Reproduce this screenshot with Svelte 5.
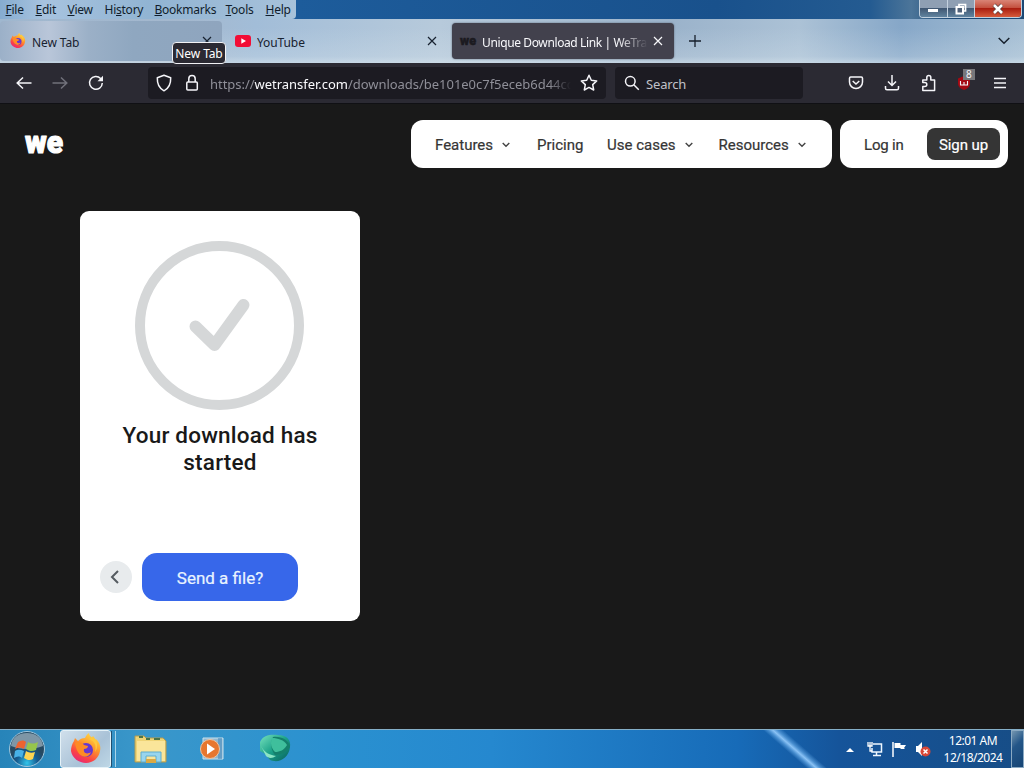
<script lang="ts">
	const menus = ["File", "Edit", "View", "History", "Bookmarks", "Tools", "Help"];
	const accessKeys = [0, 0, 0, 2, 0, 0, 0];
	const menuWidths = [30, 32, 37, 50, 71, 40, 36];

	const navItems = [
		{ label: "Features", width: 102, arrow: true },
		{ label: "Pricing", width: 70, arrow: false },
		{ label: "Use cases", width: 111.5, arrow: true },
		{ label: "Resources", width: 90, arrow: true },
	];
</script>

{#snippet firefox(size: number)}
	<svg width={size} height={size} viewBox="0 0 32 32">
		<defs>
			<linearGradient id="flame" x1="0.8" y1="0" x2="0.25" y2="1">
				<stop offset="0" stop-color="#ffe14a" />
				<stop offset="0.4" stop-color="#ff9a2b" />
				<stop offset="0.75" stop-color="#fb4345" />
				<stop offset="1" stop-color="#e5257b" />
			</linearGradient>
		</defs>
		<path
			d="M4 8l1-3 3 3c2-2 4-3 7-3 1-2 2-4 4-5 0 4 4 4 6 7l1-1c4 4 5 8 4 12-1 7-7 12-14 12S2 25 1 18c0-4 1-7 3-10z"
			fill="url(#flame)"
		/>
		<circle cx="16" cy="17" r="7" fill="#6637cf" />
		<path d="M5 10c4-2 7-1 9 2l4 1c0 2-2 3-4 3-1 4 3 6 7 3-1 4-6 6-9 4-4-2-6-7-7-13z" fill="#ff8b24" />
		<path d="M18 6c6 1 9 6 7 13 4-5 2-12-2-16-1 2-3 3-5 3z" fill="#ffc83d" />
	</svg>
{/snippet}

{#snippet close()}
	<svg class="close" width="10" height="10" viewBox="0 0 10 10">
		<path d="M1 1l8 8M9 1L1 9" fill="none" stroke="currentColor" stroke-width="1.2" />
	</svg>
{/snippet}

<div class="screen">
	<header class="titlebar">
		<nav class="menus">
			{#each menus as menu, i}
				<span style:width="{menuWidths[i]}px"
					>{menu.slice(0, accessKeys[i])}<u>{menu[accessKeys[i]]}</u>{menu.slice(accessKeys[i] + 1)}</span
				>
			{/each}
		</nav>
		<div class="window-buttons">
			<span class="minimize"><i></i></span>
			<span class="restore">
				<svg width="12" height="12" viewBox="0 0 12 12">
					<path d="M4 3V1.5h6.5V8H9" fill="none" stroke="#fff" stroke-width="1.7" />
					<rect x="1.5" y="4" width="6.5" height="6.5" fill="#50627a" stroke="#fff" stroke-width="2" />
				</svg>
			</span>
			<span class="exit">
				<svg width="12" height="10" viewBox="0 0 12 10">
					<path d="M2 1l8 8M10 1L2 9" stroke="#594040" stroke-width="4" />
					<path d="M2 1l8 8M10 1L2 9" stroke="#fff" stroke-width="2.6" />
				</svg>
			</span>
		</div>
	</header>

	<div class="tabs">
		<div class="tab hovered">
			{@render firefox(16)}
			<span class="title">New Tab</span>
			{@render close()}
			<div class="tooltip">New Tab</div>
		</div>
		<div class="tab">
			<svg width="16" height="16" viewBox="0 0 16 16">
				<rect y="2" width="16" height="12" rx="3" fill="#f20d36" />
				<path d="M6.3 5.2v5.6L11 8z" fill="#fff" />
			</svg>
			<span class="title">YouTube</span>
			{@render close()}
		</div>
		<div class="tab active">
			<svg width="16" height="16" viewBox="0 0 16 16">
				<text x="0" y="11.5" textLength="16" lengthAdjust="spacingAndGlyphs" class="favicon">we</text>
			</svg>
			<span class="title fade">Unique Download Link | WeTransfer</span>
			{@render close()}
		</div>
		<svg class="plus" width="12" height="12" viewBox="0 0 12 12">
			<path d="M6 0v12M0 6h12" stroke="#17202c" stroke-width="1.3" />
		</svg>
		<svg class="all-tabs" width="12" height="8" viewBox="0 0 12 8">
			<path d="M.7 1L6 6.3 11.3 1" fill="none" stroke="#17202c" stroke-width="1.5" />
		</svg>
	</div>

	<div class="toolbar">
		<div class="history">
			<svg width="16" height="16" viewBox="0 0 16 16">
				<path d="M15.5 8H1.5M7 2.5L1.2 8 7 13.5" />
			</svg>
			<svg class="dim" width="16" height="16" viewBox="0 0 16 16">
				<path d="M.5 8h14M9 2.5L14.800 8 9 13.5" />
			</svg>
			<svg width="16" height="16" viewBox="0 0 16 16">
				<path d="M14.3 8A6.4 6.4 0 1 1 12.6 3.5L14 5" />
				<path d="M15 .8v5.5H9.5z" fill="#f5f5f9" stroke="none" />
			</svg>
		</div>
		<div class="address">
			<svg width="16" height="18" viewBox="0 0 16 18">
				<path d="M8 1.2l6.7 2.6c.2 6-1.8 10.6-6.7 13C3.1 14.4 1.1 9.8 1.3 3.8z" stroke-linejoin="round" />
			</svg>
			<svg width="14" height="18" viewBox="0 0 14 18">
				<rect x="1.8" y="8" width="10.5" height="8" rx="1" />
				<path d="M3.8 8V4.7a3.2 3.2 0 0 1 6.4 0V8" />
			</svg>
			<span class="url">https://<b>wetransfer.com</b>/downloads/be101e0c7f5eceb6d44cd</span>
			<svg width="18" height="18" viewBox="0 0 18 18">
				<path
					d="M9 1.3l2.3 4.9 5.4.7-4 3.7 1 5.4L9 13.4 4.3 16l1-5.4-4-3.7 5.4-.7z"
					stroke-linejoin="round"
				/>
			</svg>
		</div>
		<div class="search">
			<svg width="16" height="16" viewBox="0 0 16 16">
				<circle cx="6.3" cy="6.3" r="4.8" />
				<path d="M9.8 9.8l5 5" />
			</svg>
			<span>Search</span>
		</div>
		<div class="actions">
			<svg width="16" height="16" viewBox="0 0 16 16">
				<path d="M2.7 2h10.6c.8 0 1.2.5 1.2 1.2V7a6.5 6.5 0 0 1-13 0V3.2C1.5 2.5 2 2 2.7 2z" />
				<path d="M4.7 6L8 9l3.3-3" />
			</svg>
			<svg width="16" height="16" viewBox="0 0 16 16">
				<path d="M8 0v10M4 6.5l4 4 4-4M1.5 11v2.3c0 .8.6 1.5 1.5 1.5h10c.9 0 1.5-.7 1.5-1.5V11" />
			</svg>
			<svg width="16" height="18" viewBox="0 0 16 18">
				<path
					d="M1.8 6h4V3.5a2 2 0 0 1 4 0V6h3.8v10.5H1.8v-4h2a2 2 0 0 0 0-4h-2z"
					stroke-linejoin="round"
				/>
			</svg>
			<div class="blocker">
				<svg width="14" height="14" viewBox="0 0 14 14">
					<path d="M7 0l6 2.5v5c0 3-2.5 5.5-6 6.5-3.5-1-6-3.5-6-6.500v-5z" fill="#a40913" stroke="none" />
					<path d="M3.5 5v4h7V5M7 6v3" stroke-width="1.1" />
				</svg>
				<span>8</span>
			</div>
			<svg width="14" height="14" viewBox="0 0 14 14">
				<path d="M1 2.5h12M1 7h12M1 11.5h12" />
			</svg>
		</div>
	</div>

	<main>
		<div class="site-header">
			<svg class="logo" width="42" height="24" viewBox="0 0 42 24">
				<text x="2" y="20.5" textLength="38" lengthAdjust="spacingAndGlyphs">we</text>
			</svg>
			<nav class="links">
				{#each navItems as item}
					<div class="link" style:width="{item.width}px">
						<span>{item.label}</span>
						{#if item.arrow}
							<svg width="8" height="6" viewBox="0 0 8 6">
								<path d="M.7 1L4 4.3 7.3 1" fill="none" stroke="#444" stroke-width="1.4" />
							</svg>
						{/if}
					</div>
				{/each}
			</nav>
			<div class="account">
				<span>Log in</span>
				<button>Sign up</button>
			</div>
		</div>

		<section class="card">
			<svg class="done" width="170" height="170" viewBox="0 0 170 170">
				<circle cx="84.5" cy="85.5" r="79.5" />
				<path d="M60.500 86.5L79.5 105 108.5 65" />
			</svg>
			<h1>Your download has started</h1>
			<div class="card-actions">
				<button class="back" aria-label="Back">
					<svg width="10" height="14" viewBox="0 0 10 14">
						<path d="M8 1L2 7l6 6" fill="none" stroke="#555b60" stroke-width="2" />
					</svg>
				</button>
				<button class="send">Send a file?</button>
			</div>
		</section>
	</main>

	<footer class="taskbar">
		<svg class="start" width="40" height="38" viewBox="0 0 40 38">
			<defs>
				<radialGradient id="orb" cy="0.9">
					<stop offset="0" stop-color="#32c5eb" />
					<stop offset="0.6" stop-color="#155b91" />
					<stop offset="1" stop-color="#254962" />
				</radialGradient>
			</defs>
			<circle cx="20" cy="19" r="17.5" fill="url(#orb)" stroke="#a0c7dd" />
			<path d="M4 16C5 7 12 3 20 3s15 4 16 13c-10 4-22 4-32 0z" fill="#d7e4ea" opacity="0.5" />
			<path d="M11 12c3-2 6-2 8 0l-2 7c-3-2-6-2-9 0z" fill="#ed6330" />
			<path d="M21 12c3 2 6 2 10 0l-2 8c-4 2-7 1-10-1z" fill="#96c54b" />
			<path d="M8 21c3-2 6-1 9 0l-2 7c-2-2-5-2-8 0z" fill="#48b1e7" />
			<path d="M19 21c3 2 6 2 9 1l-2 7c-3 2-6 1-9-1z" fill="#ffd451" />
		</svg>
		<div class="running">{@render firefox(32)}</div>
		<i class="stack"></i>
		<div class="pinned">
			<svg width="34" height="30" viewBox="0 0 34 30">
				<path d="M1 2h9l2 2h17l3 3v21H1z" fill="#efd476" stroke="#b29b50" />
				<path d="M3 7h28v20H3z" fill="#fae59a" />
				<path d="M5 3h4M12 5h4M20 5h6" stroke="#4b7448" stroke-width="2" />
				<path d="M7 28V18h20v10h-5v-6H12v6z" fill="#98d5ee" stroke="#5eacce" />
				<path d="M12 25h10v4H12z" fill="#dba943" />
			</svg>
			<svg width="24" height="24" viewBox="0 0 24 24">
				<path d="M3 1h20v21H3z" fill="#8eb8d3" stroke="#c8e1ed" />
				<path d="M19 1v21M21 1v21" stroke="#3d84b8" />
				<circle cx="10" cy="12" r="9.5" fill="#e77730" stroke="#edc5a4" />
				<path d="M7 6.5v11l8-5.5z" fill="#fff" />
			</svg>
			<svg width="34" height="30" viewBox="0 0 34 30">
				<defs>
					<linearGradient id="ball" x2="1" y2="1">
						<stop offset="0" stop-color="#76e2bd" />
						<stop offset="0.5" stop-color="#1ba188" />
						<stop offset="1" stop-color="#075f5c" />
					</linearGradient>
				</defs>
				<path d="M2 8C5 1 13 0 20 1c9 0 13 5 12 12-1 10-9 15-16 14-4 0-6-3-7-6L2 17z" fill="url(#ball)" />
				<path d="M15 3c-3 6-2 13 2 18 6 0 11-3 15-8-1-7-9-11-17-10z" fill="#14806b" />
				<path d="M14 4c6 0 12 2 15 7-3 5-7 7-12 7-4-4-5-9-3-14z" fill="#3fbf9c" />
				<path d="M3 12c3 6 8 9 15 10-4 3-8 2-10 0z" fill="#8be4c4" />
			</svg>
		</div>
		<div class="tray">
			<svg width="8" height="5" viewBox="0 0 8 5"><path d="M0 5l4-4 4 4z" fill="#fff" /></svg>
			<svg width="16" height="16" viewBox="0 0 16 16">
				<path d="M6 3h8.5v8H5V7M9.5 11v3M6 14.5h8" fill="none" stroke="#eef7ff" stroke-width="1.5" />
				<path d="M1 1v4h4V1M3 1v9h2" fill="none" stroke="#fff" stroke-width="1.3" />
			</svg>
			<svg width="16" height="16" viewBox="0 0 16 16">
				<path d="M2 1v15" stroke="#fff" stroke-width="1.5" />
				<path d="M3.5 2h6v2H15l-2 3 1 1H9.5V7h-6z" fill="#fff" />
			</svg>
			<svg width="16" height="16" viewBox="0 0 16 16">
				<path d="M1 5h2l4-4v14l-4-4H1z" fill="#fff" />
				<circle cx="10.5" cy="10.5" r="5" fill="#d94737" />
				<path d="M8.5 8.5l4 4M12.5 8.5l-4 4" stroke="#fff" stroke-width="1.5" />
			</svg>
		</div>
		<div class="clock">
			<span>12:01 AM</span>
			<span>12/18/2024</span>
		</div>
		<i class="show-desktop"></i>
	</footer>
</div>

<style>
	:global(body) {
		margin: 0;
		overflow: hidden;
	}

	.screen {
		width: 1024px;
		height: 768px;
		display: flex;
		flex-direction: column;
		overflow: hidden;
		font-family: "Noto Sans", "Open Sans", sans-serif;
		font-size: 12px;
		background: #191919;
	}

	svg {
		display: block;
		flex: none;
		overflow: visible;
	}

	button {
		border: 0;
		padding: 0;
		font: inherit;
	}

	.titlebar {
		height: 19px;
		display: flex;
		justify-content: space-between;
		background: linear-gradient(90deg, #1d5c9b 29%, #19518c 70%, #245b91 85%, #4c7599 89%, #1b4875 93%);
	}

	.menus {
		display: flex;
		box-sizing: border-box;
		width: 296px;
		padding-left: 5.5px;
		line-height: 20px;
		letter-spacing: -0.24px;
		color: #101d2c;
		border-radius: 0 0 4px 0;
		background: linear-gradient(90deg, #86acd0, #a7c3df 15%, #91b4d3 50%, #a7c2da);
		white-space: nowrap;
	}

	.menus span {
		flex: none;
	}

	.window-buttons {
		display: flex;
		height: 17px;
		margin-right: 2px;
		border: 1px solid #c1d0de;
		border-top: 0;
		border-radius: 0 0 4px 4px;
		overflow: hidden;
	}

	.window-buttons span {
		display: flex;
		justify-content: center;
		align-items: center;
		width: 26.5px;
		border-right: 1px solid #c4d1df;
		background: linear-gradient(#8f9fb3 45%, #415873 50%, #60839f);
	}

	.window-buttons .exit {
		width: 46px;
		border: 0;
		background: linear-gradient(#d98476, #c4513f 45%, #aa1e10 50%, #d65b3b);
	}

	.minimize i {
		width: 10px;
		height: 3px;
		margin-top: 4px;
		background: #fff;
	}

	.tabs {
		height: 44px;
		display: flex;
		align-items: center;
		gap: 4px;
		background:
			linear-gradient(180deg, transparent 20%, #dae6ee44 85%, #dae6ee99),
			linear-gradient(90deg, #9fb7cf 0%, #a4b8ce 18%, #a2bdd8 25%, #b7cadb 43%, #9bb3cb 66%, #acc2d6 78%, #86a7c8 88%, #a6bfd4);
	}

	.tab {
		position: relative;
		display: flex;
		align-items: center;
		box-sizing: border-box;
		width: 222px;
		height: 36px;
		padding: 0 11px 0 9px;
		border-radius: 4px;
		color: #182230;
	}

	.tab.hovered {
		height: 40px;
		padding-left: 10px;
		padding-right: 10px;
		background: linear-gradient(90deg, #9bb0c8, #b9c6d9 22%, #9bb0c7 40%, #8fa7c0 60%, #8fa5be);
	}

	.tab.active {
		padding-left: 8px;
		color: #f8f8fb;
		background: #42414d;
		box-shadow: 0 0 2px #596373;
	}

	.title {
		flex: 1;
		margin: 2px 5px 0 6px;
		overflow: hidden;
		white-space: nowrap;
		letter-spacing: -0.1px;
	}

	.fade {
		letter-spacing: -0.38px;
		mask-image: linear-gradient(90deg, #000 82%, transparent);
	}

	.favicon {
		font: 900 13px Roboto, sans-serif;
		fill: #1b1a20;
		stroke: #1b1a20;
		stroke-width: 0.5;
	}

	.tooltip {
		position: absolute;
		z-index: 2;
		left: 172px;
		top: 21px;
		box-sizing: border-box;
		width: 54px;
		height: 22px;
		border: 1px solid #f2f2f5;
		border-radius: 4px;
		background: #2b2a33;
		color: #fff;
		line-height: 21px;
		letter-spacing: -0.1px;
		text-align: center;
		white-space: nowrap;
	}

	.plus {
		margin-left: 11px;
	}

	.all-tabs {
		margin: 0 14px 0 auto;
	}

	.toolbar {
		height: 41px;
		display: flex;
		align-items: center;
		background: #2b2a33;
		box-sizing: border-box;
		border-bottom: 1px solid #101014;
		color: #f5f5f9;
	}

	.toolbar svg {
		fill: none;
		stroke: #f5f5f9;
		stroke-width: 1.5;
	}

	.toolbar .dim {
		stroke: #71717b;
	}

	.history {
		display: flex;
		gap: 20px;
		width: 132px;
		padding-left: 16px;
	}

	.address,
	.search {
		display: flex;
		align-items: center;
		box-sizing: border-box;
		height: 32px;
		border-radius: 4px;
		background: #1c1b22;
	}

	.address {
		width: 458px;
		padding: 0 8px;
	}

	.address svg:nth-child(2) {
		margin-left: 13px;
	}

	.url {
		flex: 1;
		margin: 2px 9px 0 11px;
		overflow: hidden;
		white-space: nowrap;
		font-size: 13px;
		letter-spacing: -0.03px;
		color: #8f8f98;
		mask-image: linear-gradient(90deg, #000 94%, transparent);
	}

	.url b {
		font-weight: 400;
		color: #fbfbfe;
	}

	.search {
		width: 188px;
		margin-left: 9px;
		padding-left: 9px;
		font-size: 13px;
		color: #c1c1c8;
	}

	.search span {
		margin: 2px 0 0 6px;
		letter-spacing: -0.15px;
	}

	.actions {
		flex: 1;
		display: flex;
		align-items: center;
		justify-content: space-between;
		padding: 0 17px 0 45px;
	}

	.actions > :nth-child(n + 2):nth-child(-n + 4) {
		margin-left: -2px;
	}

	.blocker {
		position: relative;
	}

	.blocker span {
		position: absolute;
		left: 6px;
		top: -7px;
		width: 12px;
		height: 11px;
		background: #77777b;
		font-size: 10px;
		line-height: 11px;
		text-align: center;
	}

	main {
		height: 625px;
		background: #191919;
		font-family: Roboto, sans-serif;
	}

	.site-header {
		display: flex;
		align-items: center;
		height: 48px;
		padding: 16px 16px 0 23px;
	}

	.logo text {
		font: 900 32px Roboto, sans-serif;
		fill: #fff;
		stroke: #fff;
		stroke-width: 1.2;
		stroke-linejoin: round;
	}

	.links,
	.account {
		display: flex;
		align-items: center;
		box-sizing: border-box;
		height: 48px;
		border-radius: 12px;
		background: #fff;
		font-size: 15px;
		color: #353535;
	}

	.links {
		width: 421px;
		margin-left: auto;
		padding: 2px 0 0 24px;
	}

	.link {
		display: flex;
		align-items: center;
		gap: 9px;
		white-space: nowrap;
	}

	.link span {
		-webkit-text-stroke: 0.2px #353535;
	}

	.account {
		width: 168px;
		margin-left: 8px;
		padding: 0 8px 0 24px;
		justify-content: space-between;
	}

	.account span {
		padding-top: 2px;
		letter-spacing: -0.2px;
		-webkit-text-stroke: 0.2px #353535;
	}

	.account button {
		width: 73px;
		height: 32px;
		padding-top: 2px;
		border-radius: 8px;
		background: #353535;
		color: #fff;
		letter-spacing: -0.1px;
		-webkit-text-stroke: 0.2px #fff;
	}

	.card {
		display: flex;
		flex-direction: column;
		align-items: center;
		box-sizing: border-box;
		width: 280px;
		height: 410px;
		margin: 43px 0 0 80px;
		padding: 29px 20px 20px;
		border-radius: 9px;
		background: #fff;
	}

	.done {
		fill: none;
		stroke: #d5d7d8;
		stroke-width: 10;
	}

	.done path {
		stroke-width: 12;
		stroke-linecap: round;
		stroke-linejoin: round;
	}

	h1 {
		width: 220px;
		margin: 12px 0 0;
		font-size: 22.5px;
		font-weight: 500;
		line-height: 27px;
		letter-spacing: 0.2px;
		text-align: center;
		color: #191919;
	}

	.card-actions {
		display: flex;
		align-items: center;
		align-self: stretch;
		gap: 10px;
		margin-top: auto;
	}

	.back {
		display: flex;
		align-items: center;
		justify-content: center;
		width: 32px;
		height: 32px;
		padding-right: 2px;
		border-radius: 50%;
		background: #e8ebed;
	}

	.send {
		width: 156px;
		height: 48px;
		padding-top: 2px;
		border-radius: 15px;
		background: #3767ea;
		color: #e9f4ff;
		font-size: 17px;
		-webkit-text-stroke: 0.2px #e9f4ff;
	}

	.taskbar {
		height: 39px;
		display: flex;
		align-items: center;
		box-sizing: border-box;
		border-top: 1px solid #85afc8;
		color: #fff;
		background:
			linear-gradient(41deg, transparent 41%, #64a8e5aa 46%, #8ac2f5 50%, #64a8e5aa 54%, transparent 60%) 762px 0 / 65px 100% no-repeat,
			linear-gradient(90deg, #2784b9, #3a97ca 14%, #2a91d0 32%, #2588cf 48%, #176bb8 72%, #15549a 82%, #174d86);
	}

	.start {
		margin-left: 7px;
	}

	.running {
		display: flex;
		align-items: center;
		justify-content: center;
		box-sizing: border-box;
		width: 51px;
		height: 38px;
		margin-left: 13px;
		border: 1px solid #e4f1f7;
		border-radius: 3px;
		background: linear-gradient(135deg, #d0dfeb, #a9c2d7 60%, #bed7e6);
	}

	.stack {
		width: 3px;
		height: 36px;
		border-right: 1px solid #a9d4e8;
		border-left: 1px solid #204f70;
	}

	.pinned {
		display: flex;
		align-items: center;
		margin-left: 18px;
	}

	.pinned svg:nth-child(2) {
		margin: 0 34px 0 32px;
	}

	.tray {
		display: flex;
		align-items: center;
		gap: 8px;
		margin-left: auto;
	}

	.tray svg:first-child {
		margin-right: 5px;
	}

	.clock {
		display: flex;
		flex-direction: column;
		align-items: center;
		width: 62px;
		margin: 0 7px 0 11px;
		line-height: 17px;
		letter-spacing: -0.5px;
		white-space: nowrap;
	}

	.show-desktop {
		box-sizing: border-box;
		width: 13px;
		height: 38px;
		border: 1px solid #8baac3;
		background: linear-gradient(135deg, #7496b0, #245688 40%, #164474);
	}
</style>
